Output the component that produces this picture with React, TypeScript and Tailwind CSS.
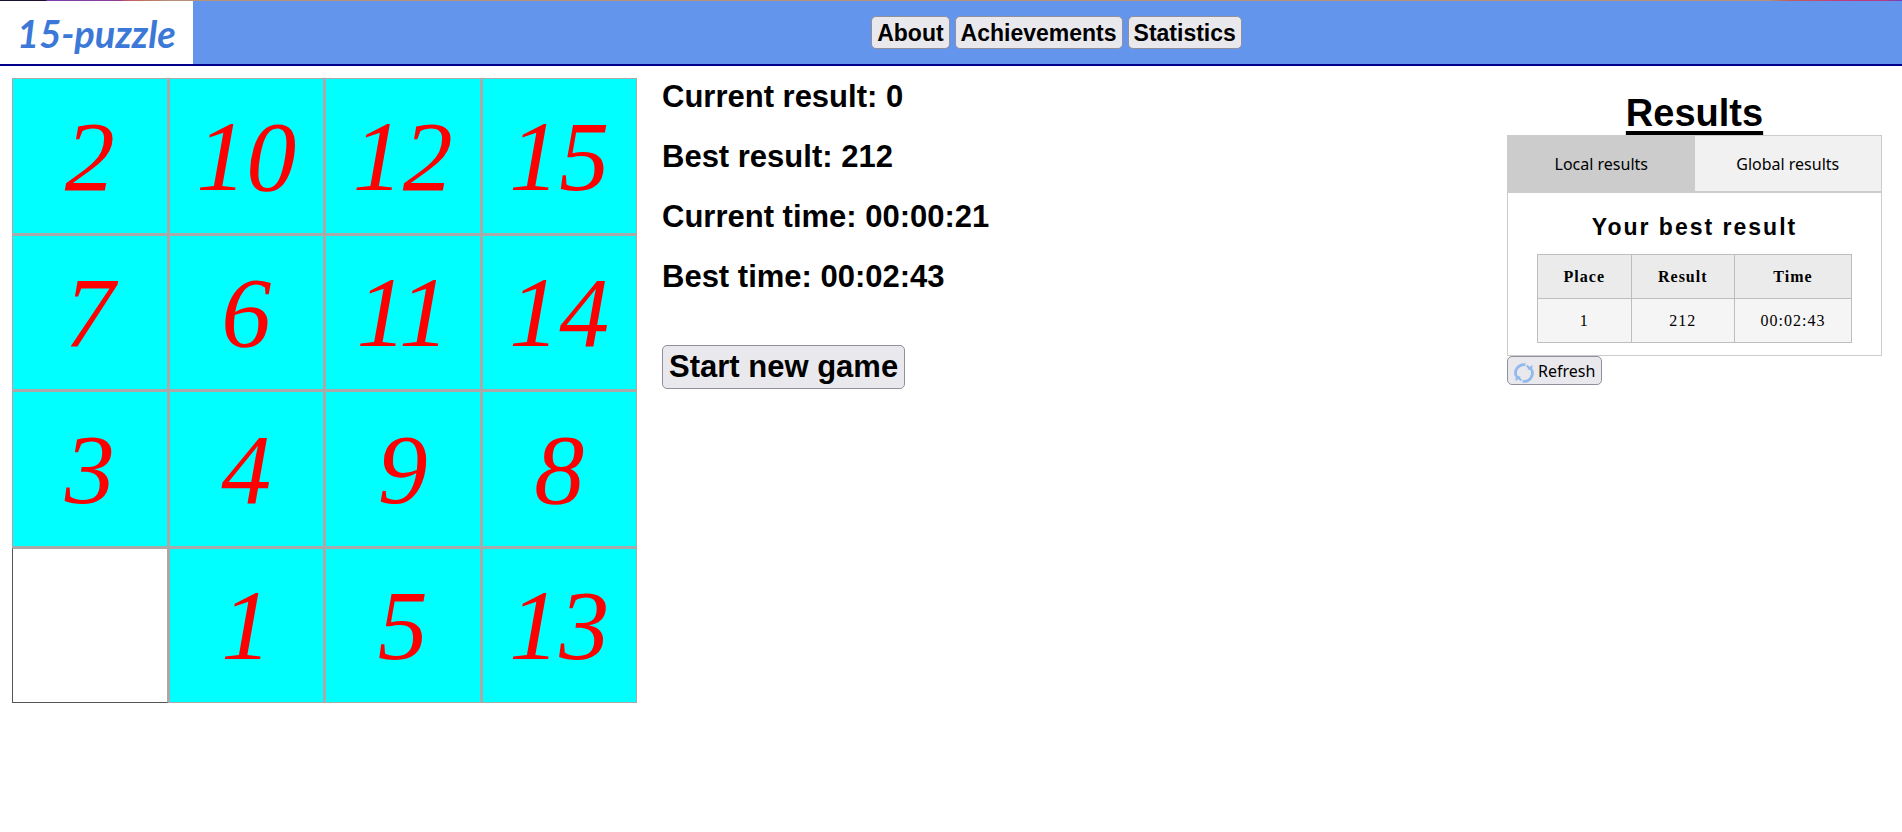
import { useState } from "react";

const tiles: (number | null)[] = [2, 10, 12, 15, 7, 6, 11, 14, 3, 4, 9, 8, null, 1, 5, 13];

const navItems = ["About", "Achievements", "Statistics"];

const stats = [
  ["Current result", "0"],
  ["Best result", "212"],
  ["Current time", "00:00:21"],
  ["Best time", "00:02:43"],
];

function Header() {
  return (
    <header>
      <div className="h-px bg-[linear-gradient(90deg,#1a1030_0_46px,#7a3fb0_47px,#8a3f98_120px,#c0506e_124px,#c0705a_140px,#b8907a_170px,#b8907a_93%,#c0605a_94%,#c03a80_97%,#b83a80_99%,#6a40c0_100%)]" />
      <div className="flex h-[65px] items-stretch border-b-2 border-[#00008b] bg-[#6495ed]">
        <a
          href="#"
          className="flex w-[193px] items-center justify-center bg-white font-[Lato,sans-serif] text-[38px] leading-none font-bold text-[#3c78d8] italic"
        >
          15-puzzle
        </a>
        <nav className="flex flex-1 items-center justify-center gap-[5px] pl-[18px]">
          {navItems.map((item) => (
            <button
              key={item}
              type="button"
              className="h-[33px] rounded-[5px] border border-[#8f8f9d] bg-[#e9e9ed] px-[5px] text-[23px] leading-[30px] font-bold"
            >
              {item}
            </button>
          ))}
        </nav>
      </div>
    </header>
  );
}

function Board() {
  return (
    <div className="grid aspect-square w-[625px] shrink-0 grid-cols-4 grid-rows-4 gap-px bg-[#a9a9a9]">
      {tiles.map((n, i) =>
        n === null ? (
          <div key={i} className="border border-t-[#a9a9a9] border-r-[#a9a9a9] border-b-[#555555] border-l-[#555555] bg-white" />
        ) : (
          <button
            key={i}
            type="button"
            className="flex items-center justify-center border border-[#a9a9a9] bg-[#00ffff] pt-0.5 font-['Liberation_Serif',serif] text-[100px] leading-none text-[#ff0000] italic"
          >
            {n}
          </button>
        ),
      )}
    </div>
  );
}

function Stats() {
  return (
    <div className="flex flex-1 flex-col items-start pt-px text-[31px] leading-9 font-bold">
      <div className="flex flex-col gap-6">
        {stats.map(([label, value]) => (
          <p key={label}>
            {label}: {value}
          </p>
        ))}
      </div>
      <button
        type="button"
        className="mt-[50px] h-11 rounded-[5px] border border-[#8f8f9d] bg-[#e9e9ed] px-[6px]"
      >
        Start new game
      </button>
    </div>
  );
}

function RefreshIcon() {
  return (
    <svg viewBox="0 0 20 20" className="mt-1 size-5" fill="none" stroke="#92b9ec" strokeWidth="2.8" aria-hidden="true">
      <path d="M8.6 18.3A8.4 8.4 0 0 0 17.8 6.9" />
      <path d="M11.4 1.7A8.4 8.4 0 0 0 2.2 13.1" />
      <path d="M12.6 2.6l3 2.4M7.4 17.4l-3-2.4" strokeWidth="2" />
      <path d="M18.4 1.8v6l-5.2-1.6z" fill="#92b9ec" stroke="none" />
      <path d="M1.6 18.2v-6l5.2 1.6z" fill="#92b9ec" stroke="none" />
    </svg>
  );
}

function Results() {
  const [tab, setTab] = useState("Local results");
  return (
    <aside className="w-[375px] shrink-0 pt-[13px]">
      <h2 className="text-center text-[38px] leading-[44px] font-bold underline decoration-4 underline-offset-[5px]">
        Results
      </h2>
      <div role="tablist" className="grid h-[57px] grid-cols-2 border border-[#cccccc] bg-[#f1f1f1]">
        {["Local results", "Global results"].map((name) => (
          <button
            key={name}
            type="button"
            role="tab"
            aria-selected={tab === name}
            onClick={() => setTab(name)}
            className="font-['Noto_Sans',sans-serif] text-[16px] aria-selected:bg-[#cccccc]"
          >
            {name}
          </button>
        ))}
      </div>
      <div role="tabpanel" className="flex flex-col items-center border border-[#cccccc] px-3 pt-5 pb-3">
        <h3 className="text-[23px] leading-[29px] font-bold tracking-[2px]">Your best result</h3>
        <table className="mt-3 border-collapse text-center font-['Liberation_Serif',serif] text-[16px] leading-[19px] tracking-[1px]">
          <thead>
            <tr className="bg-[#ebebeb]">
              {["Place", "Result", "Time"].map((h) => (
                <th key={h} className="border border-[#bebebe] px-[26px] py-3 font-bold">
                  {h}
                </th>
              ))}
            </tr>
          </thead>
          <tbody>
            <tr className="bg-[#f5f5f5]">
              {["1", "212", "00:02:43"].map((c) => (
                <td key={c} className="border border-[#bebebe] px-[26px] py-3">
                  {c}
                </td>
              ))}
            </tr>
          </tbody>
        </table>
      </div>
      <button
        type="button"
        className="flex h-[29px] items-center gap-1 rounded-[5px] border border-[#8f8f9d] bg-[#e9e9ed] px-[6px] font-['Noto_Sans',sans-serif] text-[16px] leading-6"
      >
        <RefreshIcon />
        Refresh
      </button>
    </aside>
  );
}

export default function App() {
  return (
    <div className="min-h-screen bg-white font-['Liberation_Sans',Arial,sans-serif] text-black">
      <Header />
      <main className="flex items-start gap-[25px] pt-3 pr-5 pl-3">
        <Board />
        <Stats />
        <Results />
      </main>
    </div>
  );
}
